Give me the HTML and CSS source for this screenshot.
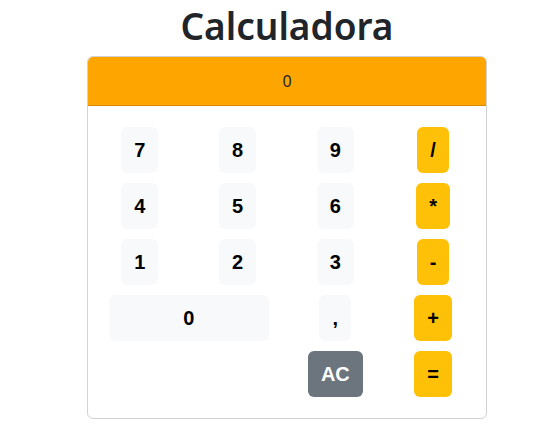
FILE: index.html
```html
<!DOCTYPE html>
<html lang="es">
<head>
<meta charset="utf-8">
<title>Calculadora</title>
<link rel="stylesheet" href="styles.css">
</head>
<body>
  <main class="page">
    <h1 class="title">Calculadora</h1>
    <div class="card">
      <div class="card-header">0</div>
      <div class="card-body">
        <div class="keys">
          <button class="btn light">7</button>
          <button class="btn light">8</button>
          <button class="btn light">9</button>
          <button class="btn warn">/</button>
          <button class="btn light">4</button>
          <button class="btn light">5</button>
          <button class="btn light">6</button>
          <button class="btn warn">*</button>
          <button class="btn light">1</button>
          <button class="btn light">2</button>
          <button class="btn light">3</button>
          <button class="btn warn">-</button>
          <button class="btn light zero">0</button>
          <button class="btn light">,</button>
          <button class="btn warn">+</button>
          <button class="btn secondary ac">AC</button>
          <button class="btn warn">=</button>
        </div>
      </div>
    </div>
  </main>
</body>
</html>
```

FILE: styles.css
```css
html, body {
  margin: 0;
  padding: 0;
  background: #fff;
}
body {
  font-family: "Noto Sans", "Open Sans", sans-serif;
  color: #212529;
}
.page {
  padding: 2px 0 0 25px;
}
.title {
  margin: 0 0 6px;
  text-align: center;
  font-size: 37px;
  line-height: 48px;
  font-weight: 600;
  color: #212529;
}
.card {
  width: 398px;
  margin: 0 auto;
  border: 1px solid #d2d2d2;
  border-radius: 6px;
  overflow: hidden;
}
.card-header {
  background: #ffa500;
  border-bottom: 1px solid #d68b00;
  height: 48px;
  display: flex;
  align-items: center;
  justify-content: center;
  font-size: 16px;
}
.card-body {
  padding: 21px 4px 21px 3px;
}
.keys {
  display: grid;
  grid-template-columns: repeat(4, 1fr);
  row-gap: 10px;
  justify-items: center;
}
.btn {
  height: 46px;
  padding: 0 12px;
  border: 1px solid transparent;
  border-radius: 6px;
  font-family: "Liberation Sans", Arial, sans-serif;
  font-weight: 700;
  font-size: 20px;
  color: #000;
  min-width: 32px;
}
.light {
  background: #f8f9fa;
}
.warn {
  background: #ffc107;
}
.secondary {
  background: #6c757d;
  color: #fff;
}
.zero {
  grid-column: span 2;
  width: 160px;
}
.ac {
  grid-column: 3;
}
```
